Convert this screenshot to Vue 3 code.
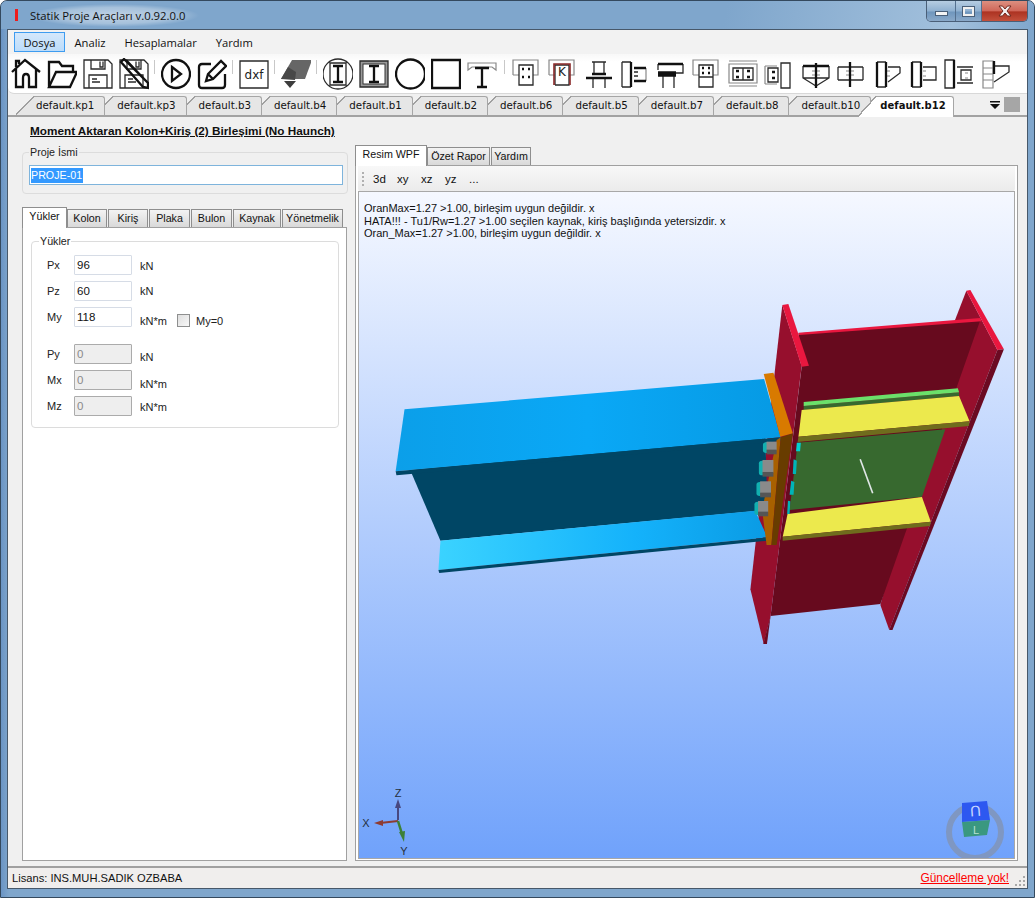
<script setup>
const menus = ["Dosya", "Analiz", "Hesaplamalar", "Yardım"];

const docTabs = ["default.kp1", "default.kp3", "default.b3", "default.b4", "default.b1", "default.b2", "default.b6", "default.b5", "default.b7", "default.b8", "default.b10", "default.b12"];

const leftTabs = [
    { label: "Yükler", width: 45 },
    { label: "Kolon", width: 40 },
    { label: "Kiriş", width: 40 },
    { label: "Plaka", width: 41 },
    { label: "Bulon", width: 41 },
    { label: "Kaynak", width: 48 },
    { label: "Yönetmelik", width: 61 },
];
const rightTabs = [
    { label: "Resim WPF", width: 72 },
    { label: "Özet Rapor", width: 63 },
    { label: "Yardım", width: 40 },
];
const viewButtons = ["3d", "xy", "xz", "yz", "..."];

const messages = [
    "OranMax=1.27 >1.00, birleşim uygun değildir. x",
    "HATA!!! - Tu1/Rw=1.27 >1.00 seçilen kaynak, kiriş başlığında yetersizdir. x",
    "Oran_Max=1.27 >1.00, birleşim uygun değildir. x",
];

const loads = [
    { name: "Px", value: "96", unit: "kN", drop: 1 },
    { name: "Pz", value: "60", unit: "kN", drop: 0 },
    { name: "My", value: "118", unit: "kN*m", drop: 8, check: true },
    { name: "Py", value: "0", unit: "kN", drop: 6, off: true, spaced: true },
    { name: "Mx", value: "0", unit: "kN*m", drop: 8, off: true },
    { name: "Mz", value: "0", unit: "kN*m", drop: 2, off: true },
];

// toolbar icons, drawn on a 30x32 box: heavy = thick black, line = thin black, soft = thin grey
const saveBody = "M1 2H25L29 6V30H1Z M8 2V11H22V2 M17 3.5V9H20V3.5 M6 30V17H24V30 M9 21H14 M9 24H17";
const colCap = "M1 17V2H26V17H21 M1 17H7";
const toolbar = [
    { heavy: "M1 14L14 2L29 14 M5 11V29H12V20Q12 16 15 16Q18 16 18 20V29H25V11 M5 9V3H8V6" },
    { heavy: "M2 29V4H12L15 8H26V13 M2 29L9 14H30L23 29Z" },
    { line: saveBody },
    { line: saveBody, heavy: "M2 4L5 1L29 25L29 30L24 29Z M7 2L28 24" },
    { sep: true },
    { heavy: "M29 16A14 14 0 1 1 1 16A14 14 0 1 1 29 16Z M11 9L20 16L11 23Z" },
    { heavy: "M14 6H5Q2 6 2 9V27Q2 30 5 30H25Q28 30 28 27V16 M9 23L11 16L24 3L29 8L16 21Z M11 16L16 21" },
    { sep: true },
    { line: "M1 3H29V30H1Z", text: "dxf" },
    { sep: true },
    { shades: [["#666", "0,21 11,2 31,2 24,21"], ["#484848", "0,21 7,9 15,14 14,22"], ["#3c3c3c", "3,23 15,23 9,30"]] },
    { sep: true },
    { line: "M30 16A15 15 0 1 1 0 16A15 15 0 1 1 30 16Z M7 5H23V27H7Z", heavy: "M10 8H20 M15 8V24 M10 24H20" },
    { box: true, line: "M1 3H29V29H1Z", heavy: "M10 8H20 M15 8V24 M10 24H20" },
    { heavy: "M30 16A14.5 14.5 0 1 1 1 16A14.5 14.5 0 1 1 30 16Z" },
    { heavy: "M1 2H29V30H1Z" },
    { soft: "M1 5H29V12L25 9H5L1 12Z", heavy: "M8 10H22 M15 10V29 M10 29H20" },
    { sep: true, wide: true },
    { soft: colCap, line: "M7 7H21V27H7Z", heavy: "M10 11H12 M16 11H18 M10 19H12 M16 19H18" },
    { soft: colCap, line: "M7 27V7H21V27H7", text: "K", red: "M6 27V6H22V27" },
    { heavy: "M2 20H28 M8 16H22", line: "M8 4H22 M10 4V16 M20 4V16 M9 20V30 M21 20V30" },
    { heavy: "M11 4V29 M14 10H26 M14 23H26", line: "M2 4H11 M2 29H11 M2 4V29 M14 14H18 M14 18H18", soft: "M26 10V23" },
    { heavy: "M2 6H27 M2 16H20 M2 14.500H20 M2 17.500H20", line: "M2 6V12 M27 6V15H20 M7 18V30 M18 18V30" },
    { soft: colCap, line: "M7 7H21V19H7Z M7 19V29H21V19", heavy: "M10 10H12 M16 10H18 M10 15H12 M16 15H18" },
    { soft: "M1 6H29V25H1Z M1 3H29 M1 28H29", line: "M5 10H25V22H5Z M15 10V22", heavy: "M8 13H11 M19 13H22 M8 19H11 M19 19H22" },
    { soft: "M1 8H13 M1 26H13 M1 8V26", line: "M4 10H14V24H4Z M17 5H26V30H17Z", heavy: "M8 14H11 M8 20H11" },
    { heavy: "M16 5V30 M3 8H29", line: "M3 8V20L16 28L29 20V8 M3 20H29", soft: "M12 13H20 M12 17H20" },
    { heavy: "M14 4V29", line: "M2 9H27 M2 22H27 M2 9V22 M27 9V22", soft: "M10 13H18 M10 17H18" },
    { heavy: "M14 4V29 M5 4V29", line: "M5 4H14 M5 29H14 M16 9H28 M16 24L28 15V9", soft: "M15 13H18 M15 18H18" },
    { heavy: "M13 4V29 M4 4V29", line: "M4 4H13 M4 29H13 M15 9H28V22H15", soft: "M15 13H18 M15 18H18" },
    { heavy: "M10 2V30", line: "M1 2H10V30H1Z M13 9H29 M13 25H29 M17 12H27V22H17Z", soft: "M21 15H24 M21 20H24" },
    { soft: "M3 3H13V30H3Z M3 10H13 M3 16H13 M3 22H13", heavy: "M14 3V16", line: "M14 8H29V14L14 24" },
];

// 3d scene polygons, in a 1561x1140 sketch space mapped to the viewport by the group transform
const scene = [
    ["#960f2d", "1428,32 1505,210 1237,1050 1215,975 1400,120"],
    ["#e9173f", "1428,32 1438,30 1521,208 1505,210"],
    ["#6b0a22", "1505,210 1521,208 1245,1050 1237,1050"],
    ["#670a1e", "1012,160 1462,122 1215,972 943,1008 1020,260"],
    ["#e9173f", "1012,158 1462,114 1466,124 1014,165"],
    ["#960f2d", "972,75 1020,258 943,1008 926,1092 893,928 953,278"],
    ["#e9173f", "972,75 987,72 1038,257 1020,260"],
    ["#6b0a22", "943,1008 934,1092 925,1092"],
    ["#37692f", "1010,488 1376,448 1318,650 990,690"],
    ["#37692f", "1025,378 1410,337 1410,348 1025,390"],
    ["#6be06a", "1025,366 1407,325 1410,337 1025,378"],
    ["#ece94d", "1020,390 1410,348 1436,424 1012,470"],
    ["#6f6c1d", "1012,470 1436,424 1434,438 1010,486"],
    ["#ece94d", "985,702 1318,651 1340,725 973,770"],
    ["#6f6c1d", "973,770 1340,725 1338,738 973,782"],
    ["#00d0d0", "1008,488 1018,488 1016,514 1006,514"],
    ["#00b4b8", "1000,538 1008,542 1006,582 998,582"],
    ["#00b4b8", "994,602 1002,606 1000,644 990,644"],
    ["#00b4b8", "986,662 992,664 990,702 984,702"],
    ["#004665", "50,570 930,470 935,690 125,782"],
    ["url(#beamTop)", "36,388 927,297 968,472 14,574"],
    ["#004665", "14,574 968,472 968,484 16,586"],
    ["url(#beamLow)", "125,782 905,692 935,772 120,870"],
    ["#004665", "120,870 935,772 935,782 122,879"],
    ["#a86000", "958,480 968,472 945,795 933,795 922,690"],
    ["#683c00", "968,472 998,460 958,795 945,795"],
    ["#d87a00", "926,282 950,278 998,460 967,470"],
];

const bolts = [
    { x: 930, y: 485, w: 28, h: 40 },
    { x: 920, y: 540, w: 30, h: 52 },
    { x: 914, y: 604, w: 30, h: 50 },
    { x: 909, y: 663, w: 28, h: 48 },
];
</script>

<template>
    <div class="window">
        <header class="titlebar">
            <span class="app-mark"></span>
            <span class="app-title">Statik Proje Araçları v.0.92.0.0</span>
            <div class="win-buttons">
                <span class="win-btn win-min"><i></i></span>
                <span class="win-btn win-max"><i></i></span>
                <span class="win-btn win-close">
                    <svg width="16" height="12" viewBox="0 0 16 12">
                        <path d="M2 1H5.500L8 4L10.500 1H14L10 6L14 11H10.500L8 8L5.500 11H2L6 6Z" fill="#f4f0f0" stroke="#6e2a20" stroke-width="1" />
                    </svg>
                </span>
            </div>
        </header>

        <div class="client">
            <nav class="menubar">
                <span v-for="(item, i) in menus" :key="item" class="menu-item" :class="{ active: i === 0 }">{{ item }}</span>
            </nav>

            <div class="toolbar">
                <template v-for="(icon, i) in toolbar" :key="i">
                    <span v-if="icon.sep" class="tool-sep" :class="{ wide: icon.wide }"></span>
                    <svg v-else class="tool" width="30" height="32" viewBox="0 0 30 32" fill="none">
                        <rect v-if="icon.box" x="1" y="3" width="28" height="26" fill="#9a9a9a" />
                        <rect v-if="icon.box" x="4" y="6" width="22" height="20" fill="#fff" stroke="#333" />
                        <polygon v-for="s in icon.shades" :key="s[1]" :points="s[1]" :fill="s[0]" />
                        <path v-if="icon.soft" :d="icon.soft" stroke="#888" stroke-width="1.2" />
                        <path v-if="icon.line" :d="icon.line" stroke="#2a2a2a" stroke-width="1.3" />
                        <path v-if="icon.red" :d="icon.red" stroke="#8a2a2a" stroke-width="1.6" />
                        <path v-if="icon.heavy" :d="icon.heavy" stroke="#111" stroke-width="2.3" />
                        <text
                            v-if="icon.text"
                            :x="icon.text === 'K' ? 14 : 15"
                            :y="icon.text === 'K' ? 18 : 21"
                            text-anchor="middle"
                            class="tool-label"
                        >{{ icon.text }}</text>
                    </svg>
                </template>
            </div>

            <div class="doc-strip">
                <div
                    v-for="(tab, i) in docTabs"
                    :key="tab"
                    class="doc-tab"
                    :class="{ current: i === docTabs.length - 1, first: i === 0 }"
                    :style="{ zIndex: i === docTabs.length - 1 ? 50 : docTabs.length - i }"
                >{{ tab }}</div>
                <svg class="doc-menu" width="10" height="8" viewBox="0 0 10 8">
                    <path d="M0 0H10V1.500H0Z M0 3H10L5 8Z" fill="#111" />
                </svg>
                <span class="doc-square"></span>
            </div>

            <main class="content">
                <section class="left-pane">
                    <h1 class="form-title">Moment Aktaran Kolon+Kiriş (2) Birleşimi (No Haunch)</h1>

                    <fieldset class="group name-group">
                        <legend>Proje İsmi</legend>
                        <div class="name-input"><span class="selected">PROJE-01</span></div>
                    </fieldset>

                    <div class="tab-strip left-strip">
                        <span
                            v-for="(tab, i) in leftTabs"
                            :key="tab.label"
                            class="tab"
                            :class="{ active: i === 0 }"
                            :style="{ width: tab.width + 'px' }"
                        >{{ tab.label }}</span>
                    </div>
                    <div class="tab-panel left-panel">
                        <fieldset class="group load-group">
                            <legend>Yükler</legend>
                            <div v-for="row in loads" :key="row.name" class="load-row" :class="{ spaced: row.spaced }">
                                <label class="load-name">{{ row.name }}</label>
                                <input class="load-input" :value="row.value" :disabled="row.off" readonly />
                                <span class="load-unit" :style="{ paddingTop: row.drop + 'px' }">{{ row.unit }}</span>
                                <label v-if="row.check" class="zero-check">
                                    <input type="checkbox" />
                                    <span>My=0</span>
                                </label>
                            </div>
                        </fieldset>
                    </div>
                </section>

                <section class="right-pane">
                    <div class="tab-strip right-strip">
                        <span
                            v-for="(tab, i) in rightTabs"
                            :key="tab.label"
                            class="tab"
                            :class="{ active: i === 0 }"
                            :style="{ width: tab.width + 'px' }"
                        >{{ tab.label }}</span>
                    </div>
                    <div class="tab-panel right-panel">
                        <div class="view-bar">
                            <span class="grip"></span>
                            <span v-for="b in viewButtons" :key="b" class="view-btn">{{ b }}</span>
                        </div>
                        <div class="viewport">
                            <svg class="scene" width="656" height="667" viewBox="359 192 656 667">
                                <defs>
                                    <linearGradient id="beamTop" x1="0" y1="0" x2="1" y2="0">
                                        <stop offset="0" stop-color="#0b9fe9" />
                                        <stop offset="0.5" stop-color="#0aa8f6" />
                                        <stop offset="1" stop-color="#069ae4" />
                                    </linearGradient>
                                    <linearGradient id="beamLow" x1="0" y1="0" x2="1" y2="0">
                                        <stop offset="0" stop-color="#3bd3ff" />
                                        <stop offset="0.6" stop-color="#14b2fb" />
                                        <stop offset="1" stop-color="#0a9be4" />
                                    </linearGradient>
                                </defs>

                                <g transform="translate(390 280) scale(0.4036 0.3333)">
                                    <polygon v-for="(p, i) in scene" :key="i" :points="p[1]" :fill="p[0]" />
                                    <line x1="1165" y1="538" x2="1196" y2="640" stroke="#dfe6e6" stroke-width="4" />
                                    <g v-for="b in bolts" :key="b.y">
                                        <rect :x="b.x - 6" :y="b.y + 2" :width="b.w" :height="b.h - 8" rx="8" fill="#12b0b0" />
                                        <rect :x="b.x + 3" :y="b.y" :width="b.w - 3" :height="b.h - 14" fill="#8a8a8a" />
                                        <rect :x="b.x + 3" :y="b.y + b.h - 16" :width="b.w - 3" :height="14" fill="#555" />
                                    </g>
                                </g>

                                <!-- axis marker -->
                                <path d="M398 820V806" stroke="#484880" stroke-width="2" />
                                <path d="M398 799L401 808H395Z" fill="#484880" />
                                <path d="M398 821L380 823" stroke="#8e3c32" stroke-width="2" />
                                <path d="M374 823L383 820L383 826Z" fill="#8e3c32" />
                                <path d="M398 821L402 834" stroke="#3c8038" stroke-width="2.500" />
                                <path d="M404 842L399 832L405 831Z" fill="#3c8038" />
                                <text x="398" y="797" class="axis-label" text-anchor="middle">Z</text>
                                <text x="366" y="827" class="axis-label" text-anchor="middle">X</text>
                                <text x="404" y="855" class="axis-label" text-anchor="middle">Y</text>

                                <!-- view cube -->
                                <circle cx="975" cy="832" r="26" fill="none" stroke="#7f97c2" stroke-width="6" />
                                <polygon points="962,803 987,801 990,820 962,822" fill="#2d58f0" />
                                <polygon points="962,822 990,820 987,835 964,837" fill="#3a9880" />
                                <text x="0" y="0" class="cube-label" transform="translate(975 806) rotate(176)" text-anchor="middle" dominant-baseline="hanging" dy="-11">U</text>
                                <text x="976" y="834" class="cube-label small" text-anchor="middle">L</text>
                            </svg>
                            <div class="messages">
                                <div v-for="m in messages" :key="m">{{ m }}</div>
                            </div>
                        </div>
                    </div>
                </section>
            </main>

            <footer class="statusbar">
                <span>Lisans: INS.MUH.SADIK OZBABA</span>
                <span class="update-link">Güncelleme yok!</span>
                <svg class="size-grip" width="12" height="12" viewBox="0 0 12 12">
                    <path d="M9 1h2v2H9z M5 5h2v2H5z M9 5h2v2H9z M1 9h2v2H1z M5 9h2v2H5z M9 9h2v2H9z" fill="#a8a8a8" />
                </svg>
            </footer>
        </div>
    </div>
</template>

<style>
html,
body {
    margin: 0;
    background: #fff;
    overflow: hidden;
}
</style>

<style scoped>
.window {
    box-sizing: border-box;
    display: flex;
    flex-direction: column;
    width: 1035px;
    height: 898px;
    padding: 0 6px 8px;
    border: 1px solid #34495e;
    border-radius: 7px 7px 0 0;
    background: linear-gradient(90deg, #6a94c4 0, #7fa6cc 8px, #7fa6cc 100%);
    font-family: "Liberation Sans", Arial, sans-serif;
    font-size: 11px;
    color: #111;
}

.titlebar {
    display: flex;
    align-items: center;
    height: 28px;
    flex: none;
    background: linear-gradient(100deg, #7fa6cc 70%, #a2c0dc 92%, #7fa6cc 100%);
    margin: 0 -6px;
    padding-left: 14px;
    border-radius: 6px 6px 0 0;
}

.app-mark {
    width: 3px;
    height: 12px;
    background: #ee1c1c;
}

.app-title {
    margin-left: 12px;
    font-family: "Open Sans", sans-serif;
    font-size: 11.3px;
    color: #111;
    background: radial-gradient(closest-side, rgba(255, 255, 255, 0.5), rgba(255, 255, 255, 0.3) 70%, rgba(255, 255, 255, 0));
    padding: 4px 14px 4px 0;
}

.win-buttons {
    display: flex;
    align-self: flex-start;
    height: 20px;
    margin-left: auto;
    margin-right: 6px;
    border: 1px solid #4a5f78;
    border-top: 0;
    border-radius: 0 0 5px 5px;
    overflow: hidden;
}

.win-btn {
    display: flex;
    align-items: center;
    justify-content: center;
}

.win-min,
.win-max {
    background: linear-gradient(#b6cde2, #8fb0d0 50%, #6f96bd 55%, #8aa9c9);
    border-right: 1px solid #54708f;
}

.win-min {
    width: 28px;
}

.win-min i {
    width: 11px;
    height: 3px;
    margin-top: 5px;
    background: #f4f4f4;
    border: 1px solid #4a5f78;
}

.win-max {
    width: 25px;
}

.win-max i {
    box-sizing: border-box;
    width: 11px;
    height: 9px;
    border: 2px solid #f0f0f0;
    outline: 1px solid #4a5f78;
}

.win-close {
    width: 45px;
    background: linear-gradient(#dc8f80, #d0685a 48%, #ad3322 55%, #c2503c);
}

.client {
    display: flex;
    flex-direction: column;
    flex: 1;
    min-height: 0;
    border: 1px solid #47586a;
    background: #f0f0f0;
}

.menubar {
    display: flex;
    align-items: center;
    height: 24px;
    flex: none;
    padding-left: 6px;
    background: #f2f2f2;
    font-family: "Open Sans", sans-serif;
    font-size: 11.2px;
}

.menu-item {
    box-sizing: border-box;
    height: 20px;
    padding: 1px 8.500px 0;
    line-height: 17px;
    border: 1px solid transparent;
}

.menu-item.active {
    background: linear-gradient(#d4e8fb, #bcdcfa);
    border-color: #3e9cf0;
}

.toolbar {
    display: flex;
    align-items: center;
    height: 40px;
    flex: none;
    background: linear-gradient(#f8f8f8, #fff 8px);
    border-bottom: 1px solid #d8d8d8;
    border-radius: 0 0 0 6px;
    box-sizing: border-box;
}

.tool {
    flex: none;
    margin: 0 3px;
}

.tool-sep {
    flex: none;
    width: 1px;
    height: 14px;
    margin: 0 3px 14px 2px;
    background: #c8c8c8;
}

.tool-sep.wide {
    margin: 0 4px 14px 4px;
}

.tool-label {
    font-family: "DejaVu Sans", sans-serif;
    font-size: 12px;
    fill: #222;
}

.doc-strip {
    display: flex;
    align-items: flex-end;
    height: 23px;
    flex: none;
    gap: 9px;
    padding-left: 27px;
    border-bottom: 2px solid #a2a2a2;
    box-sizing: border-box;
    font-family: "DejaVu Sans", sans-serif;
    font-size: 10.250px;
}

.doc-tab {
    position: relative;
    flex: none;
    height: 18px;
    line-height: 17px;
    padding: 0 10px 0 3px;
    background: #e6e6e6;
    border-top: 1px solid #a6a6a6;
    border-right: 1px solid #a6a6a6;
    border-radius: 0 3px 0 0;
    color: #111;
}

.doc-tab::before {
    content: "";
    position: absolute;
    left: -19px;
    top: -1px;
    width: 19px;
    height: 19px;
    background: linear-gradient(to top left, #e6e6e6 49%, #a0a0a0 49%, #a0a0a0 54%, transparent 54%);
}

.doc-tab.first {
    padding-left: 1px;
}

.doc-tab.current {
    height: 20px;
    margin-bottom: -2px;
    margin-left: -3px;
    background: #fff;
    font-weight: 700;
    font-size: 10px;
    padding-right: 7px;
}

.doc-tab.current::before {
    height: 21px;
    width: 19px;
    background: linear-gradient(to top left, #fff 49%, #a0a0a0 49%, #a0a0a0 54%, transparent 54%);
}

.doc-menu {
    flex: none;
    margin: 0 0 6px auto;
}

.doc-square {
    flex: none;
    width: 16px;
    height: 15px;
    margin: 0 7px 3px -5px;
    background: #a6a6a6;
}

.content {
    display: flex;
    flex: 1;
    min-height: 0;
}

.left-pane {
    box-sizing: border-box;
    display: flex;
    flex-direction: column;
    width: 347px;
    flex: none;
    padding: 7px 8px 5px 14px;
}

.form-title {
    margin: 0 0 8px 8px;
    height: 14px;
    font-size: 11.750px;
    line-height: 14px;
    font-weight: 700;
    text-decoration: underline;
    white-space: nowrap;
}

.group {
    margin: 0;
    padding: 0;
    border: 1px solid #dcdcdc;
    border-radius: 4px;
    min-width: 0;
}

.group legend {
    padding: 0 1px;
    font-size: 10.700px;
    line-height: 13px;
    color: #222;
}

.name-group {
    height: 48px;
    box-sizing: border-box;
    margin-right: -1px;
    padding: 6px 4px 0 6px;
}

.name-input {
    box-sizing: border-box;
    height: 20px;
    padding: 2px 1px;
    background: #fff;
    border: 1px solid #7eb4dc;
    font-size: 10.700px;
    line-height: 15px;
}

.selected {
    display: inline-block;
    padding-right: 1px;
    background: #3399ff;
    color: #fff;
}

.tab-strip {
    display: flex;
    align-items: flex-end;
    gap: 1px;
    height: 19px;
    flex: none;
    font-size: 10.700px;
}

.right-strip {
    height: 20px;
}

.left-strip {
    margin-top: 14px;
}

.tab {
    box-sizing: border-box;
    height: 18px;
    text-align: center;
    line-height: 17px;
    background: linear-gradient(#f3f3f3, #d9d9d9);
    border: 1px solid #8e8e8e;
    border-bottom: 0;
    white-space: nowrap;
    margin-bottom: 0;
}

.tab.active {
    height: 21px;
    margin-bottom: -1px;
    margin-right: -1px;
    position: relative;
    z-index: 1;
    background: #fff;
}

.tab-panel {
    box-sizing: border-box;
    flex: 1;
    min-height: 0;
    background: #fff;
    border: 1px solid #a0a0a0;
}

.left-panel {
    padding: 7px 7px 7px 8px;
}

.load-group {
    height: 193px;
    box-sizing: border-box;
    padding: 7px 0 0 15px;
}

.load-group legend {
    margin-left: -8px;
}

.load-row {
    display: flex;
    align-items: center;
    height: 20px;
    margin-bottom: 6px;
}

.load-row.spaced {
    margin-top: 17px;
}

.load-name {
    width: 27px;
    flex: none;
    color: #222;
}

.load-input {
    box-sizing: border-box;
    width: 58px;
    height: 20px;
    padding: 0 2px;
    border: 1px solid #d6dce6;
    border-radius: 1px;
    background: #fff;
    font: inherit;
    font-size: 11.500px;
    color: #111;
    outline: none;
}

.load-input:disabled {
    background: #eeeeee;
    border-color: #ababab;
    color: #8a8a8a;
}

.load-unit {
    width: 37px;
    margin-left: 8px;
    color: #222;
}

.zero-check {
    display: flex;
    align-items: center;
    gap: 6px;
    padding-top: 7px;
    color: #222;
}

.zero-check input {
    appearance: none;
    box-sizing: border-box;
    width: 13px;
    height: 13px;
    margin: 0;
    border: 1px solid #8e8f8f;
    background: linear-gradient(135deg, #dedede, #f8f8f8);
}

.right-pane {
    display: flex;
    flex-direction: column;
    flex: 1;
    min-width: 0;
    padding: 28px 9px 5px 0;
}

.right-panel {
    display: flex;
    flex-direction: column;
    padding: 0 2px 2px;
}

.view-bar {
    display: flex;
    align-items: center;
    gap: 9px;
    height: 26px;
    flex: none;
    padding-left: 4px;
    font-size: 11.500px;
    background: linear-gradient(#f8f8f8, #ebebeb);
    border-radius: 0 0 4px 4px;
}

.grip {
    width: 2px;
    height: 14px;
    margin-right: -1px;
    background: repeating-linear-gradient(#b0b0b0 0 2px, transparent 2px 4px);
}

.view-btn {
    min-width: 13px;
    padding: 0 1px;
}

.viewport {
    position: relative;
    flex: 1;
    min-height: 0;
    margin: 0 1px;
    background: linear-gradient(#f5f8ff, #70a2fb);
    outline: 1px solid #a8a8a8;
    overflow: hidden;
}

.scene {
    position: absolute;
    left: 0;
    top: 0;
}

.messages {
    position: relative;
    padding: 10px 0 0 5px;
    font-size: 11px;
    line-height: 12.700px;
    color: #111;
}

.axis-label {
    font-size: 11px;
    fill: #26303c;
}

.cube-label {
    font-size: 15px;
    fill: #c8d6ff;
}

.cube-label.small {
    font-size: 11px;
    fill: #b6e0d2;
}

.statusbar {
    display: flex;
    align-items: center;
    height: 22px;
    flex: none;
    padding: 0 0 0 4px;
    background: #f0eeed;
    border-top: 2px solid #a0a0a0;
    box-sizing: border-box;
    font-size: 11.150px;
}

.update-link {
    margin-left: auto;
    font-size: 11.900px;
    color: #ff0000;
    text-decoration: underline;
}

.size-grip {
    margin: 6px 1px 0 5px;
}
</style>
